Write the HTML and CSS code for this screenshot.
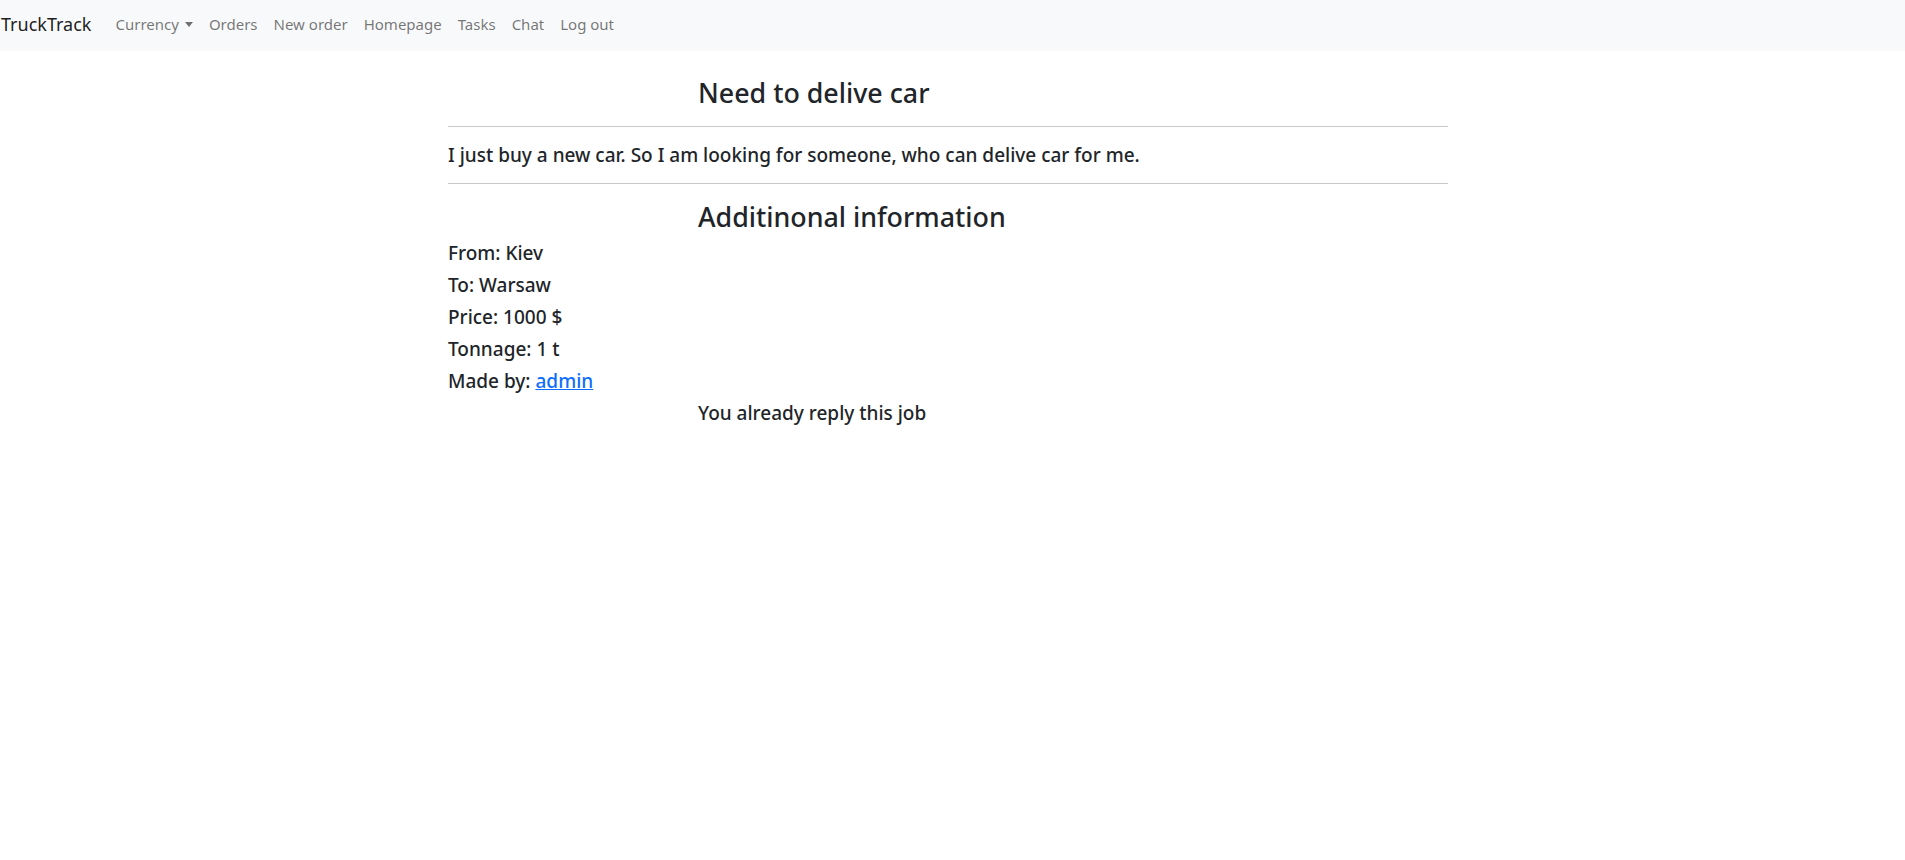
FILE: index.html
```html
<!DOCTYPE html>
<html lang="en">
<head>
<meta charset="utf-8">
<title>TruckTrack</title>
<link rel="stylesheet" href="styles.css">
</head>
<body>
<nav class="navbar">
  <a class="brand" href="#">TruckTrack</a>
  <ul class="nav">
    <li><a class="nav-link dropdown-toggle" href="#">Currency</a></li>
    <li><a class="nav-link" href="#">Orders</a></li>
    <li><a class="nav-link" href="#">New order</a></li>
    <li><a class="nav-link" href="#">Homepage</a></li>
    <li><a class="nav-link" href="#">Tasks</a></li>
    <li><a class="nav-link" href="#">Chat</a></li>
    <li><a class="nav-link" href="#">Log out</a></li>
  </ul>
</nav>
<main class="content">
  <h3 class="title">Need to delive car</h3>
  <hr class="divider">
  <h5 class="line">I just buy a new car. So I am looking for someone, who can delive car for me.</h5>
  <hr class="divider">
  <h3 class="title">Additinonal information</h3>
  <h5 class="line">From: Kiev</h5>
  <h5 class="line">To: Warsaw</h5>
  <h5 class="line">Price: 1000 $</h5>
  <h5 class="line">Tonnage: 1 t</h5>
  <h5 class="line">Made by: <a class="user-link" href="#">admin</a></h5>
  <h5 class="line indent">You already reply this job</h5>
</main>
</body>
</html>
```
FILE: styles.css
```css
* { box-sizing: border-box; }
body {
  margin: 0;
  font-family: "Noto Sans", "Open Sans", sans-serif;
  color: #212529;
  background: #fff;
}
.navbar {
  height: 51px;
  background: #f8f9fa;
  display: flex;
  align-items: flex-start;
  padding-top: 12px;
}
.brand {
  font-size: 18px;
  line-height: 24px;
  color: rgba(0,0,0,.9);
  text-decoration: none;
  margin-right: 16px;
  padding-left: 1px;
}
.nav {
  list-style: none;
  margin: 0;
  padding: 0;
  display: flex;
}
.nav-link {
  display: block;
  padding: 0 8px;
  font-size: 15px;
  line-height: 24px;
  color: rgba(0,0,0,.55);
  text-decoration: none;
}
.dropdown-toggle::after {
  content: "";
  display: inline-block;
  margin-left: 6px;
  vertical-align: 3px;
  border-top: 5px solid;
  border-left: 4.5px solid transparent;
  border-right: 4.5px solid transparent;
}
.content {
  width: 1000px;
  margin-left: 448px;
  padding-top: 25px;
}
.title {
  margin: 0 0 8px 250px;
  font-size: 26.8px;
  font-weight: 500;
  line-height: 33.6px;
}
.divider {
  margin: 16px 0;
  border: 0;
  border-top: 1px solid #c8c9ca;
  height: 0;
}
.line {
  margin: 0 0 8px;
  font-size: 19px;
  font-weight: 500;
  line-height: 24px;
}
.indent { margin-left: 250px; }
.user-link { color: #0d6efd; text-decoration: underline; }
```
